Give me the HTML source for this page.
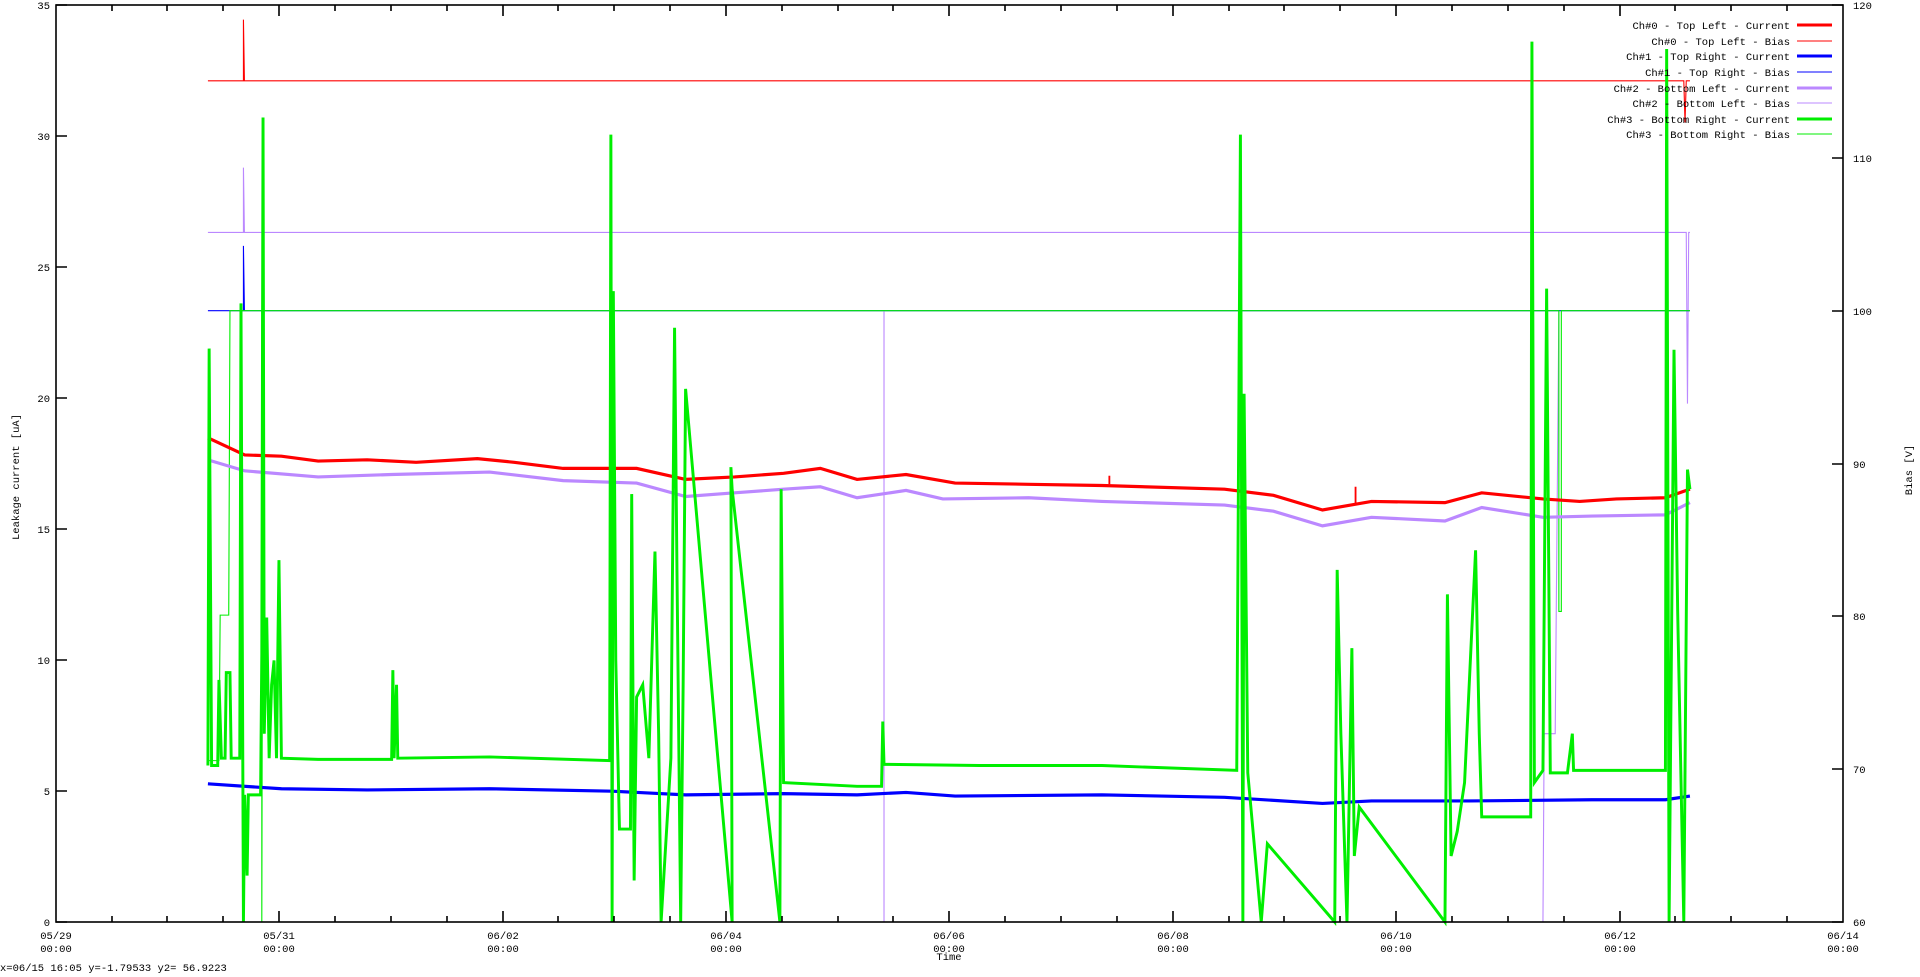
<!DOCTYPE html>
<html><head><meta charset="utf-8"><style>
html,body{margin:0;padding:0;background:#fff;width:1920px;height:977px;overflow:hidden}
svg{display:block}
text{font-family:"Liberation Mono","DejaVu Sans Mono",monospace;font-size:10.5px;fill:#000}
</style></head><body>
<svg width="1920" height="977" viewBox="0 0 1920 977" xmlns="http://www.w3.org/2000/svg">
<g transform="matrix(1.2248 0 0 1.2227 -0.3 0.1)" fill="none" stroke-linejoin="miter">
<polyline stroke="#ff0000" stroke-width="0.9" points="170,66 199,66 199,16 199.8,66 1375,66 1376,100 1377,66 1380,66"/>
<polyline stroke="#bb88ff" stroke-width="0.9" points="170,190 199,190 199,137 199.8,190 1377,190 1378,330 1379,190 1380,190"/>
<polyline stroke="#0000ff" stroke-width="0.9" points="170,254 199,254 199,201 199.8,254 1380,254"/>
<polyline stroke="#bb88ff" stroke-width="0.9" points="722,254 722,754"/>
<polyline stroke="#bb88ff" stroke-width="0.9" points="1260,754 1261,600 1270,600 1273,254"/>
<polyline stroke="#00ee00" stroke-width="0.9" points="170,622 179,622 180,503 187,503 188,254 214,254 214,754 215,254 1273,254 1273,500 1275,500 1275,254 1380,254"/>
<polyline stroke="#ff0000" stroke-width="2.6" points="170,358 200,372 230,373 260,377 300,376 340,378 390,375 420,378 460,383 520,383 560,392 600,390 640,387 670,383 700,392 740,388 780,395 840,396 900,397 1000,400 1040,405 1080,417 1120,410 1180,411 1210,403 1260,408 1290,410 1320,408 1360,407 1380,400"/>
<polyline stroke="#ff0000" stroke-width="1.5" points="906,389 906,396"/>
<polyline stroke="#ff0000" stroke-width="1.5" points="1107,398 1107,412"/>
<polyline stroke="#bb88ff" stroke-width="2.6" points="170,376 200,385 260,390 320,388 400,386 460,393 520,395 560,406 600,403 640,400 670,398 700,407 740,401 770,408 840,407 900,410 1000,413 1040,418 1080,430 1120,423 1180,426 1210,415 1260,423 1300,422 1360,421 1380,411"/>
<polyline stroke="#0000ff" stroke-width="2.6" points="170,641 230,645 300,646 400,645 500,647 560,650 640,649 700,650 740,648 780,651 900,650 1000,652 1080,657 1120,655 1200,655 1300,654 1360,654 1380,651"/>
<polyline stroke="#00ee00" stroke-width="2.4" points="170,626 171,285 173,626 178,626 179,556 181,620 184,620 185,550 188,550 189,620 196,620 197,248 199,754 200,650 202,716 203,650 213,650 214,535 215,96 216,600 218,505 220,620 222,560 224,540 226,620 228,458 230,620 260,621 320,621 321,548 322,620 324,560 325,620 400,619 498,622 499,110 500,754 501,238 503,540 506,678 515,678 516,404 518,720 520,570 525,560 530,620 535,451 538,600 540,754 548,620 551,268 553,470 556,754 558,560 560,318 598,754 597,382 598,400 637,754 638,400 640,640 700,643 720,643 721,590 722,625 800,626 900,626 1010,630 1013,110 1015,754 1016,322 1019,632 1030,754 1035,690 1090,754 1092,466 1095,600 1100,754 1104,530 1106,700 1110,660 1180,754 1182,486 1185,700 1190,680 1196,640 1205,450 1208,600 1210,668 1250,668 1251,34 1253,640 1260,630 1263,236 1266,632 1280,632 1284,600 1285,630 1360,630 1361,40 1363,754 1367,286 1370,500 1375,754 1378,384 1380,400"/>
</g>
<g stroke="#000" stroke-width="1.6" fill="none">
<rect x="56" y="5" width="1787" height="917"/>
<path d="M56 922h11M56 791h11M56 660h11M56 529h11M56 398h11M56 267h11M56 136h11M56 5h11"/>
<path d="M1843 922h-11M1843 769h-11M1843 616h-11M1843 464h-11M1843 311h-11M1843 158h-11M1843 5h-11"/>
<path d="M112 922v-6M167 922v-6M223 922v-6M279 922v-11M335 922v-6M391 922v-6M447 922v-6M503 922v-11M558 922v-6M614 922v-6M670 922v-6M726 922v-11M782 922v-6M838 922v-6M893 922v-6M949 922v-11M1005 922v-6M1061 922v-6M1117 922v-6M1173 922v-11M1229 922v-6M1284 922v-6M1340 922v-6M1396 922v-11M1452 922v-6M1508 922v-6M1564 922v-6M1620 922v-11M1675 922v-6M1731 922v-6M1787 922v-6"/>
<path d="M112 5v6M167 5v6M223 5v6M279 5v11M335 5v6M391 5v6M447 5v6M503 5v11M558 5v6M614 5v6M670 5v6M726 5v11M782 5v6M838 5v6M893 5v6M949 5v11M1005 5v6M1061 5v6M1117 5v6M1173 5v11M1229 5v6M1284 5v6M1340 5v6M1396 5v11M1452 5v6M1508 5v6M1564 5v6M1620 5v11M1675 5v6M1731 5v6M1787 5v6"/>
</g>
<g text-anchor="end">
<text x="50" y="926">0</text><text x="50" y="795">5</text><text x="50" y="664">10</text><text x="50" y="533">15</text><text x="50" y="402">20</text><text x="50" y="271">25</text><text x="50" y="140">30</text><text x="50" y="9">35</text>
</g>
<g>
<text x="1853" y="926">60</text><text x="1853" y="773">70</text><text x="1853" y="620">80</text><text x="1853" y="468">90</text><text x="1853" y="315">100</text><text x="1853" y="162">110</text><text x="1853" y="9">120</text>
</g>
<g text-anchor="middle">
<text x="56" y="939">05/29</text><text x="56" y="952">00:00</text>
<text x="279" y="939">05/31</text><text x="279" y="952">00:00</text>
<text x="503" y="939">06/02</text><text x="503" y="952">00:00</text>
<text x="726" y="939">06/04</text><text x="726" y="952">00:00</text>
<text x="949" y="939">06/06</text><text x="949" y="952">00:00</text>
<text x="1173" y="939">06/08</text><text x="1173" y="952">00:00</text>
<text x="1396" y="939">06/10</text><text x="1396" y="952">00:00</text>
<text x="1620" y="939">06/12</text><text x="1620" y="952">00:00</text>
<text x="1843" y="939">06/14</text><text x="1843" y="952">00:00</text>
<text x="949" y="960">Time</text>
<text transform="translate(19,477) rotate(-90)">Leakage current [uA]</text>
<text transform="translate(1912,470) rotate(-90)">Bias [V]</text>
</g>
<text x="0" y="971">x=06/15 16:05 y=-1.79533 y2= 56.9223</text>
<g text-anchor="end">
<text x="1790" y="29">Ch#0 - Top Left - Current</text>
<text x="1790" y="45">Ch#0 - Top Left - Bias</text>
<text x="1790" y="60">Ch#1 - Top Right - Current</text>
<text x="1790" y="76">Ch#1 - Top Right - Bias</text>
<text x="1790" y="92">Ch#2 - Bottom Left - Current</text>
<text x="1790" y="107">Ch#2 - Bottom Left - Bias</text>
<text x="1790" y="123">Ch#3 - Bottom Right - Current</text>
<text x="1790" y="138">Ch#3 - Bottom Right - Bias</text>
</g>
<g fill="none">
<path d="M1797 25h35" stroke="#ff0000" stroke-width="3"/>
<path d="M1797 41h35" stroke="#ff0000" stroke-width="1"/>
<path d="M1797 56h35" stroke="#0000ff" stroke-width="3"/>
<path d="M1797 72h35" stroke="#0000ff" stroke-width="1"/>
<path d="M1797 88h35" stroke="#bb88ff" stroke-width="3"/>
<path d="M1797 103h35" stroke="#bb88ff" stroke-width="1"/>
<path d="M1797 119h35" stroke="#00ee00" stroke-width="3"/>
<path d="M1797 134h35" stroke="#00ee00" stroke-width="1"/>
</g>
</svg>
</body></html>
